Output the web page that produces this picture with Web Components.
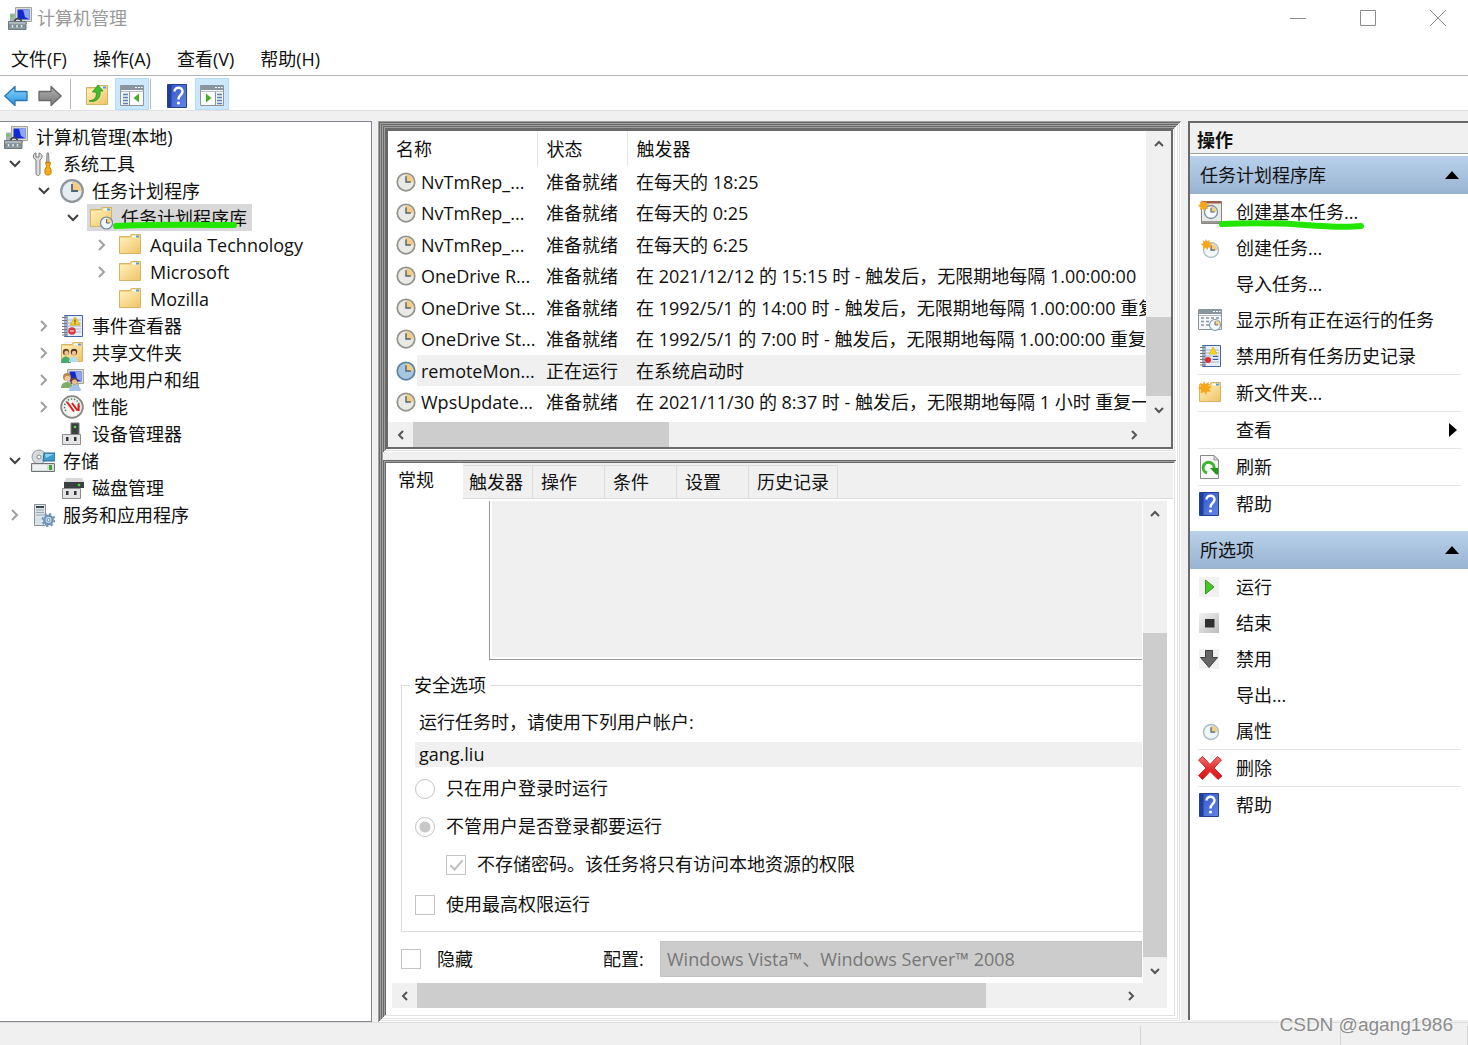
<!DOCTYPE html>
<html lang="zh-CN">
<head>
<meta charset="utf-8">
<title>计算机管理</title>
<style>
html,body{margin:0;height:100%}
body{font:18px/26px "Open Sans","Noto Sans CJK SC",sans-serif;color:#111;background:#f0f0f0;overflow:hidden}
</style>
</head>
<body>
<management-window></management-window>
<script>
const clock=(cx,cy,r,rim,face)=>`<circle cx="${cx}" cy="${cy}" r="${r}" fill="${face}" stroke="${rim}" stroke-width="${r/5}"/><path d="M${cx} ${cy}V${cy-r*.85}A${r*.85} ${r*.85} 0 0 1 ${cx+r*.85} ${cy}Z" fill="#f5cd80"/><path d="M${cx} ${cy-r*.65}V${cy}H${cx+r*.55}" fill="none" stroke="#4f6578" stroke-width="${r/6}"/>`;
const folder=(extra='')=>`<path d="M1.500 3.500H12l1-2h9.500v19H1.500z" fill="#f7d683" stroke="#d5b466"/><path d="M2 5h20v15H2z" fill="url(#fo)"/><path d="M14 2.500h7v2h-7z" fill="#fff"/><path d="M18 2.500h3v2h-3z" fill="#4da0e0"/>${extra}`;
const star=`<path d="M6 0l1.500 3L11 1l-1 4 4 .5-3 2.500 2 3-4-.5L8 14l-2-3-3.500 1.500L3 9 0 7l3-2-1-3 3 1z" fill="#f9a51a"/>`;
const monitor=`<path d="M7.500 1.500h16v14h-16z" fill="#dcdcd2" stroke="#a5a59c"/><path d="M9.500 3.500h12v10h-12z" fill="#1428d2"/><path d="M15 3.500h6.500v10L17 11z" fill="#8ea6f2"/><path d="M13 16h6v2h-6z" fill="#b5b5ae"/>`;
const win=`<path d="M.5 1.500h23v20H.5z" fill="#f4f6f7" stroke="#8c959b"/><path d="M1 2h22v4H1z" fill="#8996a0"/><path d="M15 3.500h2m1 0h2m1 0h1.500" stroke="#fff"/><path d="M1 7.500h22" stroke="#b8c0c6"/>`;
const book=`<path d="M4.500 1.500h18v21h-18z" fill="#e9eefb" stroke="#4664a8"/><path d="M4 2h4v20H4z" fill="#9fb0cf"/><path d="M8 6h13M8 9h13M8 12h13M8 15h13M8 18h13" stroke="#a9b5cc"/><path d="M2 3.500h5M2 6.500h5M2 9.500h5M2 12.500h5M2 15.500h5M2 18.500h5M2 21h5" stroke="#777"/>`;
const usb=`<path d="M2.500 12.500h18v10h-18z" fill="#e4e4e6" stroke="#8d8d90"/><path d="M6 15h2.500v4H6zm8 0h2.500v4H14z" fill="#333"/>`;
const ICONS={
computer:monitor+`<path d="M2 7.500h6v8H2z" fill="#a9b3b5"/><path d="M3 9h2.500v2.500H3z" fill="#5bd237"/><path d="M6.500 15.500c1-4 6-4 7 0" fill="none" stroke="#3b4247" stroke-width="1.700"/><path d="M.5 15.500h17.500v8H.5z" fill="#8b989e" stroke="#6d7a81"/><path d="M1 17h16.500" stroke="#cdd5d8"/><path d="M1 20h16.500" stroke="#73828a"/><path d="M4.500 19v2.500m4.500-2.500v2.500m4.500-2.500v2.500" stroke="#e5e9eb" stroke-width="1.500"/>`,
tools:`<path d="M5 8C1 6 2 1 5 1v4h3V1c4 1 4 5 1 7v14c-1 2-3 2-4 0z" fill="#dcdcdc" stroke="#777"/><path d="M16 1h1.500l.5 9h-2.500z" fill="#bbb" stroke="#888"/><path d="M14.500 10.500h5l-1 4 1.500 3v4c-1 2-5 2-6 0v-4l1.500-3z" fill="#f7ad15" stroke="#c77b00"/>`,
clock:clock(12,12,10.800,'#8e959b','#e6ecef'),
tclock:clock(12,12,10.500,'#94948f','#e9e9e6'),
tclockon:clock(12,12,10.500,'#5a83a3','#a5c8e0'),
sclock:clock(13,13,7.500,'#a9bac6','#eef6fb'),
folder:folder(),
folderclock:folder(clock(17.500,17,6,'#6f8798','#eef5f9')),
foldernew:folder(star),
events:book+`<path d="M15 3l5 8H10z" fill="#fbd427" stroke="#caa000" stroke-width=".7"/><path d="M15 5.500v3m0 .7v1" stroke="#333"/><circle cx="12" cy="17" r="3.800" fill="#d83a3e"/><path d="M10 17h4" stroke="#fff"/>`,
history:book+`<path d="M15 3l4 7h-8z" fill="#fbd427" stroke="#dcb300" stroke-width=".7"/><circle cx="10" cy="16" r="3" fill="#e02b2f"/><path d="M15 12h5v1h-5zm0 3h5v1h-5z" fill="#345c9d"/>`,
share:folder(`<circle cx="6" cy="11" r="3.200" fill="#6d4a2d"/><circle cx="6.500" cy="12" r="2.200" fill="#efc49a"/><circle cx="14" cy="11" r="3.200" fill="#4b3426"/><circle cx="14" cy="12" r="2.200" fill="#efc49a"/><path d="M1 22c0-8 9-9 10 0z" fill="#49aa6d"/><path d="M9 21c0-7 9-7 9 0z" fill="#b3dbee"/>`),
users:monitor+`<circle cx="7" cy="9" r="4" fill="#b98a4b"/><circle cx="7.500" cy="10.500" r="2.800" fill="#f0c99c"/><path d="M1 20c0-8 12-8 12 0z" fill="#7fae68"/><circle cx="14" cy="13" r="3.600" fill="#6b4630"/><circle cx="14.500" cy="14" r="2.600" fill="#e9b98f"/><path d="M9 23c0-8 12-8 12 0z" fill="#a3c5ea"/>`,
perf:`<circle cx="12" cy="12" r="10.800" fill="#f7f7f4" stroke="#878783" stroke-width="1.800"/><path d="M6 16a7.500 7.500 0 1 1 12 0" fill="none" stroke="#4f7d68" stroke-width="1.500" stroke-dasharray="1.500 1.500"/><path d="M7 7l7 9.500M12 8l5.500 7.500M18.500 9v7" stroke="#dd1c1c" stroke-width="2"/>`,
device:`<path d="M11 1h8v12h-8z" fill="#3b4042" stroke="#777"/><circle cx="15" cy="5" r="1.300" fill="#4be03a"/>`+usb,
storage:`<circle cx="8" cy="8" r="7" fill="#d4dadd" stroke="#949c9f"/><circle cx="8" cy="8" r="2" fill="#fff" stroke="#888"/><path d="M13 4h11v8H12z" fill="#3e9bd0" stroke="#266b98"/><path d="M14 5h9l-8 4z" fill="#8ad2f1"/><path d="M.5 14.500h23v8H.5z" fill="#d8dadc" stroke="#6d7477"/><path d="M2 16h14v5H2z" fill="#f0f1f2"/><path d="M18 16h3v5h-3z" fill="#38a52f"/>`,
disk:`<path d="M6 2h16l2 4H4z" fill="#d7d9da"/><path d="M4 6h20v6H4z" fill="#3b3f41"/><circle cx="19" cy="9" r="1.300" fill="#3de03a"/>`+usb,
services:`<path d="M3.500 1.500h11v21h-11z" fill="#d9e2e8" stroke="#87949c"/><path d="M5 3h8v2H5z" fill="#3c4a53"/><path d="M5 7h8M5 9.500h8M5 12h8" stroke="#9aa9b2"/><circle cx="17.500" cy="17" r="4.200" fill="#cfe0f0" stroke="#6f94ba" stroke-width="2.400"/><circle cx="17.500" cy="17" r="6" fill="none" stroke="#6f94ba" stroke-width="2" stroke-dasharray="2.200 2.500"/><circle cx="17.500" cy="17" r="1.500" fill="#fff" stroke="#5c83ad"/>`,
back:`<path d="M.8 12L11 2.500V7.500h12v9H11v5z" fill="url(#bl)" stroke="#2a75ae" stroke-width="1.300" stroke-linejoin="round"/>`,
fwd:`<path d="M23.200 12L13 2.500V7.500H1v9h12v5z" fill="url(#gr)" stroke="#6a6a6a" stroke-width="1.300" stroke-linejoin="round"/>`,
up:folder(`<path d="M4 17c7-1 8-5 7-9H7.500L13 1l5 6h-3c1 6-3 12-11 10z" fill="#43bd2c" stroke="#239018" stroke-width=".8"/>`),
panel:win+`<path d="M9.500 8v13" stroke="#8c959b"/><path d="M3 10.500h5M3 13.500h5M3 16.500h5M3 19.500h5" stroke="#5980b2" stroke-width="1.500"/><path d="M11 8h12v13H11z" fill="#fff"/><path d="M19 9.500v9L13.500 14z" fill="#47af25"/>`,
actionpanel:win+`<path d="M15.500 8v13" stroke="#8c959b"/><path d="M17 10.500h5M17 13.500h5M17 16.500h5M17 19.500h5" stroke="#5980b2" stroke-width="1.500"/><path d="M1 8h13v13H1z" fill="#fff"/><path d="M6 9.500v9l5.500-4.500z" fill="#47af25"/>`,
help:`<path d="M1.500.5h19v23h-19z" fill="url(#hb)" stroke="#23418f"/><path d="M2 1h3.500v22H2z" fill="#203f9d"/><path d="M8.500 7.500C8.500 2.500 16.500 2.500 16.500 7.500c0 3.500-4 3.500-4 8" fill="none" stroke="#fff" stroke-width="2.400"/><circle cx="12.500" cy="19" r="1.600" fill="#fff"/>`,
basic:`<path d="M3.500 1.500h20v22h-20z" fill="#e9e9e6" stroke="#8b8581"/><path d="M4 1h19v2.500H4z" fill="#9d5b4e"/><path d="M4 22h19" stroke="#999" stroke-width="2"/>`+clock(13,12,6.500,'#7890a0','#f4f9fb')+`<g transform="scale(.8)">${star}</g>`,
create:clock(13,14,7.500,'#b3c0c8','#f3f8fb')+`<g transform="translate(3 3) scale(.8)">${star}</g>`,
running:win+`<path d="M3 10h3m2 0h3m2 0h3m2 0h3M3 13.500h3m2 0h3m2 0h3M3 17h3m2 0h3" stroke="#8a98a4" stroke-width="1.500"/>`+clock(17,17,5.500,'#829aa9','#f5fafc'),
refresh:`<path d="M2.500.5H16l4.500 4.500v18.500h-18z" fill="#f8f8f8" stroke="#888"/><path d="M16 .5V5h4.500z" fill="#ddd" stroke="#999"/><path d="M9 18a5.500 5.500 0 1 1 7-4" fill="none" stroke="#3ab52e" stroke-width="3"/><path d="M12 13h8v6.500h-2z" fill="#25951c"/>`,
run:`<path d="M1 2h20v20H1z" fill="#f1f1f1"/><path d="M7.500 5v14l8.500-7z" fill="#49c32b" stroke="#2b9b18"/>`,
stop:`<path d="M1 2h20v20H1z" fill="url(#st)"/><path d="M7 8h9.500v8.500H7z" fill="#303030"/>`,
disable:`<path d="M1 2h20v20H1z" fill="#f1f1f1"/><path d="M7.500 3.500h7v7h5L11 20.500 2.500 10.500h5z" fill="#666" stroke="#3f3f3f"/>`,
del:`<path d="M4.500.5L12 8.500l7.500-8 4 3.500-7.500 8 8 8-4 3.500-8-8-7.500 8-4-4 7.500-7.500-7.500-8z" fill="url(#rd)" stroke="#c73030"/>`
};
const DEFS=`<defs><linearGradient id="fo" x2="1" y2="1"><stop stop-color="#fff0b8"/><stop offset="1" stop-color="#f0c468"/></linearGradient><linearGradient id="bl" x2="0" y2="1"><stop stop-color="#8fd5fa"/><stop offset="1" stop-color="#2197e3"/></linearGradient><linearGradient id="gr" x2="0" y2="1"><stop stop-color="#b0b0b0"/><stop offset="1" stop-color="#777"/></linearGradient><linearGradient id="hb" x2="1" y2="1"><stop stop-color="#2f55c8"/><stop offset="1" stop-color="#6285e4"/></linearGradient><linearGradient id="st" x2="1" y2="1"><stop stop-color="#f4f4f4"/><stop offset="1" stop-color="#bbb"/></linearGradient><linearGradient id="rd" x2="0" y2="1"><stop stop-color="#f57272"/><stop offset=".5" stop-color="#e53030"/><stop offset="1" stop-color="#e00d0d"/></linearGradient></defs>`;
const define=(name,render)=>customElements.define(name,class extends HTMLElement{
  connectedCallback(){ if(!this.shadowRoot) this.attachShadow({mode:'open'}).innerHTML=render(this); }
});
const BTN='button{font:inherit;color:inherit;border:0;background:none;padding:0;margin:0;text-align:left}';

define('app-icon',e=>`<style>:host{display:block;width:24px;height:24px;flex:none}svg{display:block;width:100%;height:100%}</style><svg viewBox="0 0 24 24" aria-hidden="true">${DEFS}${ICONS[e.getAttribute('name')]||''}</svg>`);

define('title-bar',()=>`<style>${BTN}:host{display:flex;align-items:center;height:36px;padding-left:8px;background:#fff;color:#999}
span{margin-left:5px;flex:1}button{width:70px;height:36px;display:grid;place-items:center}button:last-child{width:65px;padding-left:5px}svg{display:block;fill:none;stroke:#8c8c8c}</style>
<app-icon name="computer"></app-icon><span>计算机管理</span>
<button aria-label="最小化"><svg width="16" height="16"><path d="M0 8.500h16"/></svg></button>
<button aria-label="最大化"><svg width="16" height="16"><path d="M.5.5h15v15H.5z"/></svg></button>
<button aria-label="关闭"><svg width="16" height="16"><path d="M0 0l16 16M16 0L0 16"/></svg></button>`);

define('menu-bar',()=>`<style>${BTN}:host{display:flex;gap:26px;align-items:center;height:33px;padding:6px 0 0 11px;background:#fff;border-bottom:1px solid #b4b4b4}</style>
<button>文件(F)</button><button>操作(A)</button><button>查看(V)</button><button>帮助(H)</button>`);

define('tool-bar',()=>`<style>${BTN}:host{display:flex;align-items:flex-end;height:34px;padding-left:4px;background:#fff;border-bottom:1px solid #e2e2e2}
button{box-sizing:border-box;height:32px;width:34px;display:grid;place-items:center;padding-top:3px}button.on{background:#cce8ff;box-shadow:inset 0 0 0 1px #b4dbf7}
.edge{justify-items:start}i{width:1px;height:30px;background:#b8b8b8;margin:0 8px 1px 0}.edge+i{margin-left:-2px}.up{width:36px}i.b{margin:0 10px 1px 1px}</style>
<button class="edge" aria-label="后退"><app-icon name="back"></app-icon></button><button class="edge" aria-label="前进"><app-icon name="fwd"></app-icon></button><i></i>
<button class="up" aria-label="向上"><app-icon name="up"></app-icon></button><button class="on" aria-label="显示控制台树"><app-icon name="panel"></app-icon></button><i class="b"></i>
<button aria-label="帮助"><app-icon name="help"></app-icon></button><button class="on" aria-label="显示操作窗格"><app-icon name="actionpanel"></app-icon></button>`);

define('tree-item',e=>{const l=+e.getAttribute('level'),o=e.getAttribute('open');
return `<style>:host{display:flex;align-items:center;height:27px;padding-left:${l?(l-1)*29:2}px;white-space:nowrap}
.c{width:29px;flex:none;display:${l?'grid':'none'};place-items:center}svg{fill:none;stroke-width:2}
.b{display:flex;align-items:center;height:27px;padding:0 5px 0 2px}.b.sel{background:#d9d9d9}span{margin-left:8px}</style>
<div class="c">${o==='yes'?'<svg width="12" height="8" stroke="#404040"><path d="M1 1l5 5 5-5"/></svg>':o==='no'?'<svg width="8" height="12" stroke="#a0a0a0"><path d="M1 1l5 5-5 5"/></svg>':''}</div>
<div class="b ${e.hasAttribute('selected')?'sel':''}"><app-icon name="${e.getAttribute('icon')}"></app-icon><span><slot></slot></span></div>`});

define('console-tree',()=>`<style>:host{display:block;position:relative;background:#fff;border:1px solid #828790;border-left:0;padding-top:1px;overflow:hidden}
.mark{position:absolute;left:110px;top:97px}</style>
<tree-item level="0" icon="computer">计算机管理(本地)</tree-item>
<tree-item level="1" open="yes" icon="tools">系统工具</tree-item>
<tree-item level="2" open="yes" icon="clock">任务计划程序</tree-item>
<tree-item level="3" open="yes" icon="folderclock" selected>任务计划程序库</tree-item>
<tree-item level="4" open="no" icon="folder">Aquila Technology</tree-item>
<tree-item level="4" open="no" icon="folder">Microsoft</tree-item>
<tree-item level="4" icon="folder">Mozilla</tree-item>
<tree-item level="2" open="no" icon="events">事件查看器</tree-item>
<tree-item level="2" open="no" icon="share">共享文件夹</tree-item>
<tree-item level="2" open="no" icon="users">本地用户和组</tree-item>
<tree-item level="2" open="no" icon="perf">性能</tree-item>
<tree-item level="2" icon="device">设备管理器</tree-item>
<tree-item level="1" open="yes" icon="storage">存储</tree-item>
<tree-item level="2" icon="disk">磁盘管理</tree-item>
<tree-item level="1" open="no" icon="services">服务和应用程序</tree-item>
<svg class="mark" width="130" height="12" fill="none" stroke="#22e600" stroke-width="6" stroke-linecap="round"><path d="M6 7Q40 5 124 6"/></svg>`);

define('scroll-bar',e=>{const v=e.hasAttribute('vertical');const [a,b,c]=e.getAttribute('parts').split(' ');
return `<style>${BTN}:host{display:flex;flex-direction:${v?'column':'row'};background:#f0f0f0;min-width:0;min-height:0}
button{flex:none;width:${v?'100%':'25px'};height:25px;display:grid;place-items:center}svg{fill:none;stroke:#555;stroke-width:2}.t{background:#cdcdcd}</style>
<button aria-label="${v?'向上滚动':'向左滚动'}"><svg width="12" height="12"><path d="${v?'M2 8l4-4 4 4':'M8 2L4 6l4 4'}"/></svg></button>
<div style="flex:${a} 0 0"></div><div class="t" style="flex:${b} 0 0"></div><div style="flex:${c} 0 0"></div>
<button aria-label="${v?'向下滚动':'向右滚动'}"><svg width="12" height="12"><path d="${v?'M2 4l4 4 4-4':'M4 2l4 4-4 4'}"/></svg></button>`});

const TASKS=[['NvTmRep_...','准备就绪','在每天的 18:25'],['NvTmRep_...','准备就绪','在每天的 0:25'],['NvTmRep_...','准备就绪','在每天的 6:25'],
['OneDrive R...','准备就绪','在 2021/12/12 的 15:15 时 - 触发后，无限期地每隔 1.00:00:00'],
['OneDrive St...','准备就绪','在 1992/5/1 的 14:00 时 - 触发后，无限期地每隔 1.00:00:00 重复'],
['OneDrive St...','准备就绪','在 1992/5/1 的 7:00 时 - 触发后，无限期地每隔 1.00:00:00 重复'],
['remoteMon...','正在运行','在系统启动时',1],['WpsUpdate...','准备就绪','在 2021/11/30 的 8:37 时 - 触发后，无限期地每隔 1 小时 重复一']];
define('task-list',()=>`<style>:host{display:grid;grid-template:minmax(0,1fr) 25px/minmax(0,1fr) 25px;background:#fff;overflow:hidden}
.v{overflow:hidden}table{table-layout:fixed;width:100%;border-collapse:collapse}
th,td{padding:0;text-align:left;font-weight:400;white-space:nowrap;overflow:hidden}
thead tr{height:35px}th{padding-left:8px;border-right:1px solid #e5e5e5}th:nth-child(n+2){padding-left:9px}th:last-child{border:0}
tbody tr:nth-child(odd){height:31px}tbody tr:nth-child(even){height:32px}td:nth-child(n+2){padding-left:9px}
.n{display:flex;align-items:center;padding-left:8px}app-icon{width:20px;height:20px}.n span{margin-left:5px}.on td{background:#f0f0f0}.on td:first-child{background:linear-gradient(90deg,#fff 29px,#f0f0f0 29px)}
.h{grid-row:2;grid-column:1}scroll-bar[vertical]{grid-row:1;grid-column:2}.x{background:#f0f0f0}</style>
<div class="v"><table><colgroup><col style="width:149px"><col style="width:90px"><col></colgroup>
<thead><tr><th>名称</th><th>状态</th><th>触发器</th></tr></thead><tbody>
${TASKS.map(t=>`<tr class="${t[3]?'on':''}"><td><div class="n"><app-icon name="${t[3]?'tclockon':'tclock'}"></app-icon><span>${t[0]}</span></div></td><td>${t[1]}</td><td>${t[2]}</td></tr>`).join('')}</tbody></table></div>
<scroll-bar vertical parts="160 79 1"></scroll-bar><scroll-bar class="h" parts="0 256 452"></scroll-bar><div class="x"></div>`);

define('task-detail',()=>`<style>${BTN}:host{display:flex;flex-direction:column;background:#fff;overflow:hidden;min-height:0}
.tabs{display:flex;align-items:flex-end;height:35px;flex:none;background:#f0f0f0;border-bottom:1px solid #dcdcdc}
.tabs button{box-sizing:border-box;height:33px;min-width:72px;padding:0 8px;border:1px solid #dcdcdc;border-width:1px 1px 0 0}
.tabs button.on{min-width:77px;height:36px;margin-bottom:-1px;padding:0 12px 4px;background:#fff;border-color:#fff;position:relative}
.tabs button.on+button{padding:0 8px 0 6px;min-width:70px;width:70px}
.body{flex:1;display:grid;grid-template:minmax(0,1fr) 25px/minmax(0,1fr) 24px;padding:2px 6px 6px 0;min-height:0}
.page{overflow:hidden;padding-right:1px}
textarea{display:block;box-sizing:border-box;margin:0 0 0 103px;width:calc(100% - 103px);height:159px;border:1px solid #999;border-width:0 0 1px 1px;background:#f0f0f0;box-shadow:inset 2px -2px #fff;resize:none;border-radius:0;outline:0;padding:0}
fieldset{margin:12px 0 0 15px;padding:0 0 4px 13px;border:1px solid #dcdcdc;border-right:0;min-width:0}
legend{margin-left:-5px;padding:0 4px;line-height:26px}
.lead{display:block;padding:11px 0 7px 4px}
input[type=text]{display:block;box-sizing:border-box;width:100%;height:25px;border:0;background:#f0f0f0;font:inherit;color:inherit;padding:0 4px 2px;margin-bottom:3px;border-radius:0;outline:0}
.r{display:flex;align-items:center;height:38px}.r label{margin-left:11px;padding-bottom:2px}.in{padding-left:31px;height:37px}.last{height:44px}
input[type=radio],input[type=checkbox]{appearance:none;box-sizing:border-box;width:20px;height:20px;margin:0;border:1px solid #c4c4c4;background:#fff;flex:none}
input[type=radio]{border-radius:50%}input[type=radio]:checked{background:radial-gradient(circle,#c8c8c8 5px,#fff 6px)}
input[type=checkbox]:checked{position:relative}input[type=checkbox]:checked::after{content:"";position:absolute;left:6px;top:1px;width:5px;height:11px;border:solid #c0c0c0;border-width:0 2px 2px 0;transform:rotate(42deg)}
.foot{display:flex;align-items:center;padding:9px 0 0 15px}.foot .a{margin-left:16px;width:166px}.foot .c{width:57px}
select{appearance:none;flex:1;min-width:0;height:36px;box-sizing:border-box;border:1px solid #c4c4c4;background:#ccc;color:#777;opacity:1;font:inherit;padding:0 6px;border-radius:0}
.h{margin-left:6px;grid-row:2}.x{background:#f0f0f0}</style>
<div class="tabs" role="tablist"><button role="tab" class="on">常规</button><button role="tab">触发器</button><button role="tab">操作</button><button role="tab">条件</button><button role="tab">设置</button><button role="tab">历史记录</button></div>
<div class="body"><div class="page"><textarea aria-label="描述" readonly></textarea>
<fieldset><legend>安全选项</legend><label class="lead" for="acc">运行任务时，请使用下列用户帐户:</label><input type="text" id="acc" value="gang.liu" readonly>
<div class="r"><input type="radio" name="m" id="m1"><label for="m1">只在用户登录时运行</label></div>
<div class="r"><input type="radio" name="m" id="m2" checked><label for="m2">不管用户是否登录都要运行</label></div>
<div class="r in"><input type="checkbox" id="k1" checked><label for="k1">不存储密码。该任务将只有访问本地资源的权限</label></div>
<div class="r last"><input type="checkbox" id="k2"><label for="k2">使用最高权限运行</label></div></fieldset>
<div class="foot"><input type="checkbox" id="k3"><label class="a" for="k3">隐藏</label><label class="c" for="cfg">配置:</label><select id="cfg"><option>Windows Vista™、Windows Server™ 2008</option></select></div></div>
<scroll-bar vertical parts="107 324 1"></scroll-bar><scroll-bar class="h" parts="0 567 132"></scroll-bar><div class="x"></div></div>`);

define('task-workspace',()=>`<style>:host{display:flex;flex-direction:column;gap:8px;padding:5px;min-width:0;min-height:0;
box-shadow:inset 1px 1px #a0a0a0,inset -1px -1px #fff,inset 2px 2px #696969,inset -2px -2px #e3e3e3,inset 3px 3px #a0a0a0,inset -3px -3px #fff,inset 4px 4px #696969,inset -4px -4px #e3e3e3,inset 5px 5px #a0a0a0,inset -5px -5px #fff}
.f{padding:3px;box-shadow:inset 1px 1px #696969,inset -1px -1px #fff,inset 2px 2px #a0a0a0,inset -2px -2px #e3e3e3,inset 3px 3px #696969,inset -3px -3px #fff;display:grid;min-height:0;grid-template-columns:minmax(0,1fr)}
task-list{border:2px solid #696969;height:316px}.g{flex:1}</style>
<div class="f"><task-list></task-list></div><div class="f g"><task-detail></task-detail></div>`);

define('action-item',e=>`<style>${BTN}:host{display:block}:host([divided]){border-top:1px solid #e4e4e4;margin:0 7px 0 8px}
button{display:flex;align-items:center;width:100%;height:36px;padding:0 8px}:host([divided]) button{padding:0}span{margin-left:14px;flex:1}</style>
<button><app-icon name="${e.getAttribute('icon')||''}"></app-icon><span><slot></slot></span>${e.hasAttribute('more')?'<svg width="16" height="16"><path d="M4 1v14l8-7z"/></svg>':''}</button>`);

define('action-section',e=>`<style>${BTN}:host{display:block;margin-bottom:9px}
h2{margin:0;font:inherit;height:38px;background:linear-gradient(#b9d1ea,#98b3d2)}button{display:flex;align-items:center;width:100%;height:38px;padding:0 9px 0 10px}span{flex:1}</style>
<h2><button><span>${e.getAttribute('heading')}</span><svg width="14" height="8"><path d="M0 8l7-8 7 8z"/></svg></button></h2><slot></slot>`);

define('actions-pane',()=>`<style>:host{display:block;position:relative;background:#fff;border:2px solid #696969;border-width:2px 0 0 2px;margin-bottom:2px;min-width:0}
h1{margin:0 0 2px;font:inherit;font-weight:700;height:30px;line-height:34px;padding-left:7px;background:#f0f0f0;border-bottom:1px solid #a0a0a0;overflow:hidden}
.mark{position:absolute;left:25px;top:95px}</style>
<h1>操作</h1>
<action-section heading="任务计划程序库"><action-item icon="basic">创建基本任务...</action-item><action-item icon="create">创建任务...</action-item><action-item>导入任务...</action-item><action-item icon="running">显示所有正在运行的任务</action-item><action-item icon="history">禁用所有任务历史记录</action-item><action-item divided icon="foldernew">新文件夹...</action-item><action-item divided more>查看</action-item><action-item divided icon="refresh">刷新</action-item><action-item divided icon="help">帮助</action-item></action-section>
<action-section heading="所选项"><action-item icon="run">运行</action-item><action-item icon="stop">结束</action-item><action-item icon="disable">禁用</action-item><action-item>导出...</action-item><action-item icon="sclock">属性</action-item><action-item divided icon="del">删除</action-item><action-item divided icon="help">帮助</action-item></action-section>
<svg class="mark" width="152" height="14" fill="none" stroke="#22e600" stroke-width="6" stroke-linecap="round"><path d="M7 6Q50 4 90 7T146 8"/></svg>`);

define('status-bar',()=>`<style>:host{display:flex;height:23px;box-sizing:border-box;border-top:1px solid #dcdcdc;background:#f0f0f0;padding-top:3px;position:relative}
i{border-right:1px solid #d5d5d5}i.a{flex:1}i.b{width:199px}i.c{width:126px}
span{position:absolute;right:15px;bottom:7px;font:19px/26px "Liberation Sans",sans-serif;color:#8c8c8c;text-shadow:-1px -1px #fff;white-space:nowrap}</style><i class="a"></i><i class="b"></i><i class="c"></i><span>CSDN @agang1986</span>`);

define('management-window',()=>`<style>:host{display:flex;flex-direction:column;height:100vh}
main{flex:1;min-height:0;margin-top:10px;display:grid;grid-template:minmax(0,1fr)/372px 6px minmax(0,1fr) 7px 280px}
task-workspace{grid-column:3}actions-pane{grid-column:5}</style>
<title-bar></title-bar><menu-bar></menu-bar><tool-bar></tool-bar><main><console-tree></console-tree><task-workspace></task-workspace><actions-pane></actions-pane></main><status-bar></status-bar>`);
</script>
</body>
</html>
